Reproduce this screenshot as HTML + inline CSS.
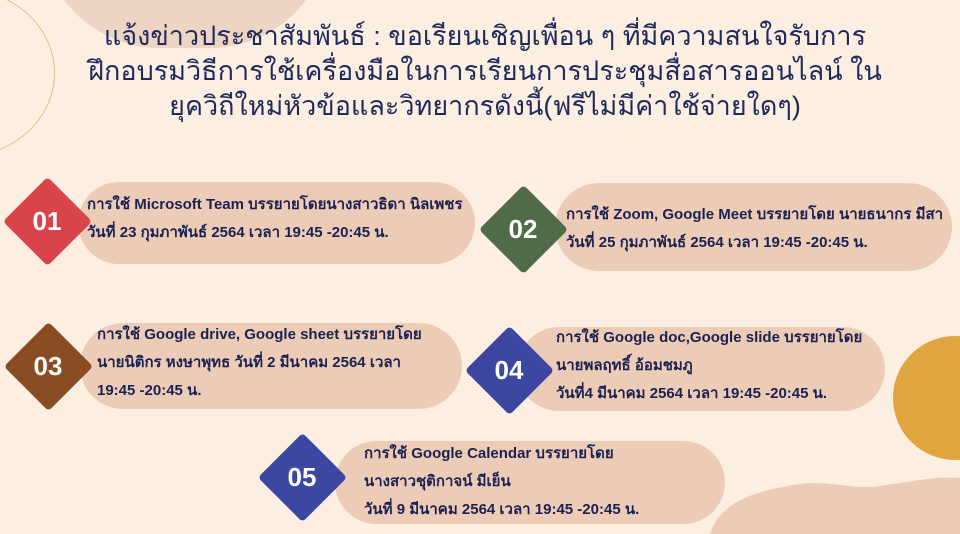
<!DOCTYPE html>
<html><head><meta charset="utf-8"><style>
*{margin:0;padding:0;box-sizing:border-box}
html,body{width:960px;height:534px;overflow:hidden}
body{background:#fcefe1;position:relative;font-family:"Liberation Sans","Noto Sans CJK SC",sans-serif;color:#1b2150}
.abs{position:absolute}
.title{left:0;width:960px;top:19px;text-align:center;font-size:27px;line-height:35px;color:#1e2a5c;padding-left:10px}
.pill{position:absolute;background:#ecccb7;border-radius:44px}
.dia{position:absolute;width:63px;height:63px;transform:rotate(45deg);border-radius:4px}
.num{position:absolute;color:#fff;font-weight:bold;font-size:26px;width:90px;text-align:center;line-height:30px}
.t{position:absolute;font-weight:bold;font-size:15px;line-height:28px;white-space:nowrap}
</style></head><body>
<div class="abs" style="left:40px;top:-80px;width:290px;height:128px;background:#eed4c2;border-radius:0 0 120px 120px"></div>
<div class="abs" style="left:-135px;top:-12px;width:190px;height:170px;border:1.5px solid #dcc08a;border-radius:50%"></div>
<div class="abs" style="left:893px;top:336px;width:124px;height:124px;background:#e0a53e;border-radius:50%"></div>
<svg class="abs" style="left:700px;top:470px" width="260" height="64"><path d="M10 64 C20 30 60 20 100 14 C130 10 150 20 180 16 C220 10 240 6 260 8 L260 64 Z" fill="#ecccb7"/></svg>
<div class="abs title">แจ้งข่าวประชาสัมพันธ์ : ขอเรียนเชิญเพื่อน ๆ ที่มีความสนใจรับการ<br>ฝึกอบรมวิธีการใช้เครื่องมือในการเรียนการประชุมสื่อสารออนไลน์ ใน<br>ยุควิถีใหม่หัวข้อและวิทยากรดังนี้(ฟรีไม่มีค่าใช้จ่ายใดๆ)</div>

<div class="pill" style="left:78px;top:182px;width:397px;height:82px"></div>
<div class="dia" style="left:16px;top:190px;background:#d9434a"></div>
<div class="num" style="left:2px;top:206px">01</div>
<div class="t" style="left:87px;top:191px">การใช้ Microsoft Team บรรยายโดยนางสาวธิดา นิลเพชร<br>วันที่ 23 กุมภาพันธ์ 2564 เวลา 19:45 -20:45 น.</div>

<div class="pill" style="left:555px;top:183px;width:397px;height:88px"></div>
<div class="dia" style="left:492px;top:198px;background:#4f6b48"></div>
<div class="num" style="left:478px;top:214px">02</div>
<div class="t" style="left:566px;top:201px">การใช้ Zoom, Google Meet บรรยายโดย นายธนากร มีสา<br>วันที่ 25 กุมภาพันธ์ 2564 เวลา 19:45 -20:45 น.</div>

<div class="pill" style="left:80px;top:323px;width:382px;height:86px"></div>
<div class="dia" style="left:17px;top:335px;background:#8a4c22"></div>
<div class="num" style="left:3px;top:351px">03</div>
<div class="t" style="left:97px;top:321px">การใช้ Google drive, Google sheet บรรยายโดย<br>นายนิติกร หงษาพุทธ วันที่ 2 มีนาคม 2564 เวลา<br>19:45 -20:45 น.</div>

<div class="pill" style="left:517px;top:327px;width:368px;height:84px"></div>
<div class="dia" style="left:478px;top:339px;background:#3b47a0"></div>
<div class="num" style="left:464px;top:355px">04</div>
<div class="t" style="left:556px;top:324px">การใช้ Google doc,Google slide บรรยายโดย<br>นายพลฤทธิ์ อ้อมชมภู<br>วันที่4 มีนาคม 2564 เวลา 19:45 -20:45 น.</div>

<div class="pill" style="left:335px;top:441px;width:390px;height:83px"></div>
<div class="dia" style="left:271px;top:446px;background:#3b47a0"></div>
<div class="num" style="left:257px;top:462px">05</div>
<div class="t" style="left:364px;top:440px">การใช้ Google Calendar บรรยายโดย<br>นางสาวชุติกาจน์ มีเย็น<br>วันที่ 9 มีนาคม 2564 เวลา 19:45 -20:45 น.</div>
</body></html>
